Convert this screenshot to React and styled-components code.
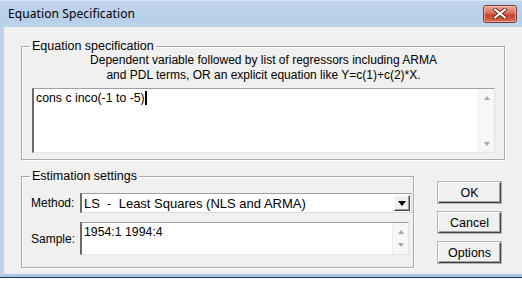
import styled, { createGlobalStyle } from "styled-components";

const Global = createGlobalStyle`
  html, body { margin: 0; padding: 0; background: #fff; }
  * { box-sizing: border-box; }
`;

const App = () => {
  return (
    <Screen>
      <Global />
      <TitleBar>
        <Title>Equation Specification</Title>
        <CloseButton>
          <svg width="16" height="11" viewBox="0 0 16 11">
            <path d="M3 1.5 L13 9.5 M13 1.5 L3 9.5" stroke="#6b2418" strokeWidth="4" strokeLinecap="round" />
            <path d="M3 1.5 L13 9.5 M13 1.5 L3 9.5" stroke="#fff" strokeWidth="2.2" strokeLinecap="round" />
          </svg>
        </CloseButton>
      </TitleBar>
      <Body>
        <Group $width="484px">
          <Legend $ml="-2px">Equation specification</Legend>
          <Hint>
            Dependent variable followed by list of regressors including ARMA
            <br />
            and PDL terms, OR an explicit equation like Y=c(1)+c(2)*X.
          </Hint>
          <EditBox $height="65px">
            <EditText>
              cons c inco(-1 to -5)<Caret />
            </EditText>
            <ScrollBar>
              <Arrow $up />
              <Arrow />
            </ScrollBar>
          </EditBox>
        </Group>
        <BottomRow>
          <Group $width="393px" $pad="10px 1px 12px 9px">
            <Legend $ml="-1px">Estimation settings</Legend>
            <SettingsGrid>
              <FieldLabel>Method:</FieldLabel>
              <Select>
                <SelectText>LS&nbsp; - &nbsp;Least Squares (NLS and ARMA)</SelectText>
                <DropButton>
                  <svg width="8" height="5" viewBox="0 0 8 5">
                    <path d="M0 0 H8 L4 5 Z" fill="#000" />
                  </svg>
                </DropButton>
              </Select>
              <FieldLabel>Sample:</FieldLabel>
              <EditBox $height="33px" $mr="3px">
                <EditText>1954:1 1994:4</EditText>
                <ScrollBar $small>
                  <Arrow $up />
                  <Arrow />
                </ScrollBar>
              </EditBox>
            </SettingsGrid>
          </Group>
          <Buttons>
            <Button>OK</Button>
            <Button>Cancel</Button>
            <Button>Options</Button>
          </Buttons>
        </BottomRow>
      </Body>
    </Screen>
  );
};

export default App;

const Screen = styled.div`
  width: 522px;
  height: 282px;
  background: #fff;
  overflow: hidden;
  display: flex;
  flex-direction: column;
`;

const TitleBar = styled.div`
  height: 27px;
  flex: none;
  display: flex;
  align-items: center;
  justify-content: space-between;
  padding: 0 5px 2px 8px;
  background: linear-gradient(#c2d6ec, #b8cfe9 60%, #bcd3ec);
  border-top: 1px solid #d8e6f4;
`;

const Title = styled.span`
  font-family: "Noto Sans", "DejaVu Sans", sans-serif;
  font-size: 12px;
  color: #000;
  letter-spacing: 0.1px;
`;

const CloseButton = styled.div`
  width: 34px;
  height: 18px;
  margin-top: 1px;
  border: 1px solid #7a3a34;
  border-radius: 3px;
  background: linear-gradient(#e8a493, #d9705b 45%, #c4432a 55%, #d6664d);
  box-shadow: inset 0 0 0 1px rgba(255, 220, 210, 0.55);
  display: flex;
  align-items: center;
  justify-content: center;
`;

const Body = styled.div`
  flex: none;
  height: 250px;
  background: #f0f0f0;
  border-left: 4px solid #bcd3ec;
  border-bottom: 3px solid #a8c6e6;
  box-shadow: 0 1px 0 #1e3550;
  padding: 13px 0 0 17px;
  display: flex;
  flex-direction: column;
  gap: 10px;
`;

const Group = styled.fieldset`
  margin: 0;
  width: ${(p) => p.$width};
  padding: ${(p) => p.$pad || "0 9px 6px 10px"};
  border: 1px solid #a9a9a9;
  box-shadow: inset 1px 1px 0 #fff, 1px 1px 0 #fff;
  font-family: "Liberation Sans", Arial, sans-serif;
  font-size: 11px;
  color: #000;
`;

const Legend = styled.legend`
  padding: 0 2px;
  margin-left: ${(p) => p.$ml};
  font-size: 12.5px;
  line-height: 13px;
`;

const Hint = styled.div`
  text-align: center;
  font-size: 12px;
  line-height: 15px;
  margin: 0 0 5px;
`;

const EditBox = styled.div`
  height: ${(p) => p.$height};
  margin-right: ${(p) => p.$mr || "0"};
  background: #fff;
  border-top: 1px solid #a0a0a0;
  border-left: 2px solid #6a6a6a;
  border-right: 1px solid #e3e3e3;
  border-bottom: 1px solid #e3e3e3;
  display: flex;
`;

const EditText = styled.div`
  flex: 1;
  padding: 2px 0 0 2px;
  font-size: 12.3px;
  line-height: 14px;
  display: flex;
  align-items: flex-start;
`;

const Caret = styled.span`
  display: inline-block;
  width: 2px;
  height: 14px;
  background: #000;
`;

const ScrollBar = styled.div`
  width: 16px;
  flex: none;
  background: #f7f7f7;
  border-left: 1px solid #ededed;
  display: flex;
  flex-direction: column;
  justify-content: space-between;
  align-items: center;
  padding: ${(p) => (p.$small ? "7px 0 7px" : "7px 0 6px")};
`;

const Arrow = styled.span`
  width: 0;
  height: 0;
  border-left: 3.5px solid transparent;
  border-right: 3.5px solid transparent;
  ${(p) =>
    p.$up ? "border-bottom: 4px solid #a8a8a8;" : "border-top: 4px solid #a8a8a8;"}
`;

const BottomRow = styled.div`
  display: flex;
  align-items: flex-start;
  gap: 24px;
`;

const SettingsGrid = styled.div`
  display: grid;
  grid-template-columns: 49px 1fr;
  row-gap: 9px;
  align-items: center;
`;

const FieldLabel = styled.span`
  font-size: 12px;
`;

const Select = styled.div`
  height: 20px;
  background: #fff;
  border-top: 1px solid #a0a0a0;
  border-left: 2px solid #6a6a6a;
  border-right: 1px solid #dcdcdc;
  border-bottom: 1px solid #dcdcdc;
  display: flex;
  align-items: center;
`;

const SelectText = styled.span`
  flex: 1;
  padding-left: 2px;
  font-size: 13px;
`;

const DropButton = styled.div`
  width: 16px;
  height: 16px;
  margin-right: 1px;
  background: #f0f0f0;
  border-top: 1px solid #fff;
  border-left: 1px solid #fff;
  border-right: 1px solid #404040;
  border-bottom: 1px solid #404040;
  box-shadow: inset -1px -1px 0 #a0a0a0;
  display: flex;
  align-items: center;
  justify-content: center;
`;

const Buttons = styled.div`
  margin-top: 12px;
  display: flex;
  flex-direction: column;
  gap: 9px;
`;

const Button = styled.button`
  width: 63px;
  height: 21px;
  padding: 0;
  background: #f0f0f0;
  border-top: 1px solid #fff;
  border-left: 1px solid #fff;
  border-right: 1px solid #404040;
  border-bottom: 1px solid #404040;
  box-shadow: inset -1px -1px 0 #a0a0a0, 0 0 0 1px #b5b5b5;
  font-family: "Liberation Sans", Arial, sans-serif;
  font-size: 12.5px;
  color: #000;
`;
